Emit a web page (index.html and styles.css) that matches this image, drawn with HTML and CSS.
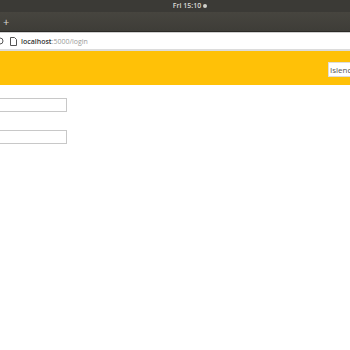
FILE: index.html
```html
<!DOCTYPE html>
<html>
<head>
<meta charset="utf-8">
<link rel="stylesheet" href="styles.css">
</head>
<body>
<div class="panel"><span class="clock">Fri 15:10</span><span class="dot"></span></div>
<div class="tabbar"><span class="plus">+</span></div>
<div class="urlbar">
  <svg class="reload" width="8" height="8" viewBox="0 0 8 8"><circle cx="3" cy="4" r="3" fill="none" stroke="#555" stroke-width="1"/></svg>
  <svg class="pageicon" width="7" height="9" viewBox="0 0 7 9"><path d="M0.5 0.5h4l2 2v6h-6z" fill="none" stroke="#555" stroke-width="1"/></svg>
  <span class="host">localhost</span><span class="rest">:5000/login</span>
</div>
<div class="page">
  <header class="header">
    <input class="lang" type="text" value="Islend">
  </header>
  <form class="form">
    <input class="field" type="text">
    <input class="field" type="password">
  </form>
</div>
</body>
</html>
```
FILE: styles.css
```css
html, body {
  margin: 0;
  padding: 0;
  background: #fff;
  overflow: hidden;
  font-family: "Open Sans", "DejaVu Sans", sans-serif;
}
.panel {
  height: 12px;
  background: #3b3a36;
  display: flex;
  align-items: center;
  justify-content: center;
  gap: 2px;
  padding-left: 30px;
}
.clock {
  color: #dcdcd6;
  font-size: 7px;
  font-weight: 600;
  line-height: 12px;
}
.dot {
  width: 4px;
  height: 4px;
  border-radius: 50%;
  background: #cfcfca;
}
.tabbar {
  height: 19px;
  background: linear-gradient(#47453f, #3e3d38);
  display: flex;
  align-items: center;
  border-bottom: 1px solid #2a2926;
}
.plus {
  color: #d8d8d2;
  font-size: 11px;
  margin-left: 3px;
  line-height: 19px;
}
.urlbar {
  height: 16px;
  background: #fff;
  border-top: 1px solid #cfcfcf;
  border-bottom: 2px solid #dcdcdc;
  display: flex;
  align-items: center;
  font-size: 7px;
}
.reload {
  margin-left: -3px;
}
.pageicon {
  margin-left: 5px;
  margin-right: 4px;
}
.host {
  color: #333;
  font-weight: 600;
}
.rest {
  color: #9a9a9a;
}
.page {
  padding: 0;
}
.header {
  background: #ffc107;
  height: 34px;
  display: flex;
  align-items: center;
  justify-content: flex-end;
  overflow: hidden;
}
.lang {
  width: 44px;
  height: 15px;
  box-sizing: border-box;
  margin-right: -22px;
  margin-top: 2px;
  border: 1px solid #ddd;
  padding: 0 1px;
  font-family: "Open Sans", "DejaVu Sans", sans-serif;
  font-size: 8px;
  color: #555;
  background: #fff;
  outline: none;
}
.form {
  display: flex;
  flex-direction: column;
  align-items: flex-start;
  gap: 18px;
  padding-top: 13px;
}
.field {
  width: 166px;
  height: 14px;
  box-sizing: border-box;
  margin-left: -99px;
  border: 1px solid #c8c8c8;
  background: #fff;
  outline: none;
}
```
